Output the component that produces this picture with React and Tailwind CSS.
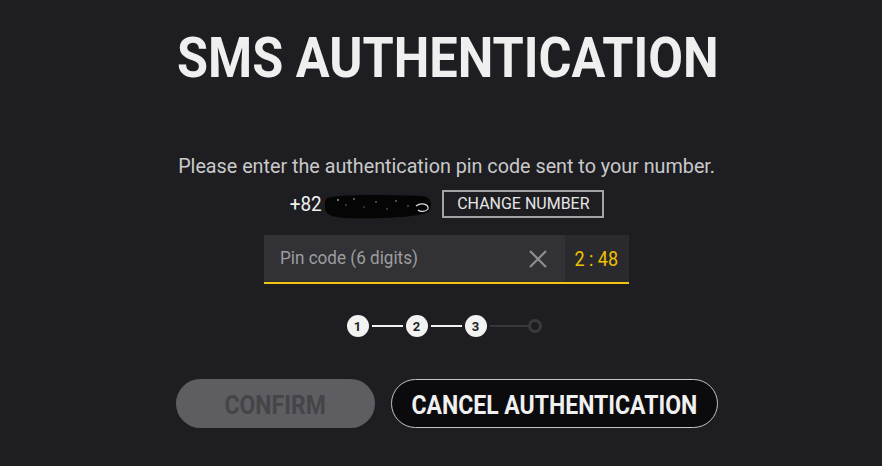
import React from "react";

function Step({ n, active }) {
  if (!active) {
    return <div className="w-[14px] h-[14px] rounded-full border-[3px] border-[#3a3a3d]" />;
  }
  return (
    <div className="w-[22px] h-[22px] rounded-full bg-[#f2f2f2] flex items-center justify-center text-[13px] font-bold text-[#1e1e22] leading-none">
      {n}
    </div>
  );
}

export default function App() {
  return (
    <div
      className="w-[882px] h-[466px] bg-[#1e1e22] flex flex-col items-center overflow-hidden pl-[12px]"
      style={{ fontFamily: "Roboto, 'Liberation Sans', sans-serif" }}
    >
      <h1 className="mt-[26px] h-[64px] flex items-center text-[56px] font-bold text-[#efefef] leading-none scale-x-[0.9] translate-x-[1px] whitespace-nowrap">
        SMS AUTHENTICATION
      </h1>

      <p className="mt-[64px] text-[21px] text-[#c9c9c9] leading-[24px] scale-x-[0.94] whitespace-nowrap">
        Please enter the authentication pin code sent to your number.
      </p>

      <div className="mt-[12px] flex items-center h-[28px] translate-x-[-1px]">
        <span className="text-[21px] text-[#f0f0f0] scale-x-[0.9] leading-none">+82</span>
        <svg width="110" height="28" viewBox="0 0 110 28" className="ml-[1px] translate-y-[2px]">
          <path d="M3 6 C20 2, 60 3, 98 4 C108 5, 109 14, 104 20 C96 25, 60 27, 20 26 C6 25, 1 22, 1 15 C1 10, 1 8, 3 6 Z" fill="#050505" />
          <circle cx="14" cy="8" r="0.9" fill="#aaa" />
          <circle cx="22" cy="13" r="0.7" fill="#888" />
          <circle cx="30" cy="7" r="0.8" fill="#bbb" />
          <circle cx="40" cy="15" r="0.7" fill="#777" />
          <circle cx="52" cy="10" r="0.8" fill="#999" />
          <circle cx="63" cy="17" r="0.7" fill="#888" />
          <circle cx="72" cy="9" r="0.8" fill="#aaa" />
          <circle cx="84" cy="14" r="0.7" fill="#999" />
          <path d="M92 14 C97 10, 105 12, 104 17 C102 20, 96 20, 94 18" stroke="#ddd" strokeWidth="1.2" fill="none" />
        </svg>
        <button className="ml-[8px] h-[28px] w-[162px] border-2 border-[#a3a3a3] text-[17px] text-[#e6e6e6] flex items-center justify-center">
          <span className="scale-x-[0.94] whitespace-nowrap">CHANGE NUMBER</span>
        </button>
      </div>

      <div className="mt-[17px] w-[365px] h-[49px] flex border-b-2 border-[#f1c40f] translate-x-[-1px]">
        <div className="flex-1 bg-[#323236] flex items-center pl-[16px] pr-[16px]">
          <span className="text-[19px] text-[#9d9d9f] flex-1 origin-left scale-x-[0.9] whitespace-nowrap">
            Pin code (6 digits)
          </span>
          <svg width="20" height="20" viewBox="0 0 20 20" className="mr-[1px]">
            <path d="M2 2L18 18M18 2L2 18" stroke="#8e8e90" strokeWidth="2.2" />
          </svg>
        </div>
        <div className="w-[64px] bg-[#2a2a2e] flex items-center justify-center text-[20px] text-[#f0c000]">
          <span className="scale-x-[0.9] whitespace-nowrap">2 : 48</span>
        </div>
      </div>

      <div className="mt-[31px] flex items-center translate-x-[-3px]">
        <Step n={1} active />
        <div className="mx-[3px] w-[31px] h-[2px] bg-[#f0f0f0]" />
        <Step n={2} active />
        <div className="mx-[3px] w-[31px] h-[2px] bg-[#f0f0f0]" />
        <Step n={3} active />
        <div className="ml-[3px] w-[38px] h-[2px] bg-[#38383b]" />
        <Step />
      </div>

      <div className="mt-[42px] flex gap-[16px]">
        <button className="w-[199px] h-[49px] pt-[4px] rounded-full bg-[#5e5d62] text-[25px] font-bold text-[#454448] flex items-center justify-center">
          <span className="scale-x-[0.92]">CONFIRM</span>
        </button>
        <button className="w-[327px] h-[49px] pt-[4px] rounded-full bg-[#0b0b0e] border-[1.5px] border-[#c4c4c4] text-[25px] font-bold text-[#f0f0f0] flex items-center justify-center">
          <span className="scale-x-[0.92] whitespace-nowrap">CANCEL AUTHENTICATION</span>
        </button>
      </div>
    </div>
  );
}
